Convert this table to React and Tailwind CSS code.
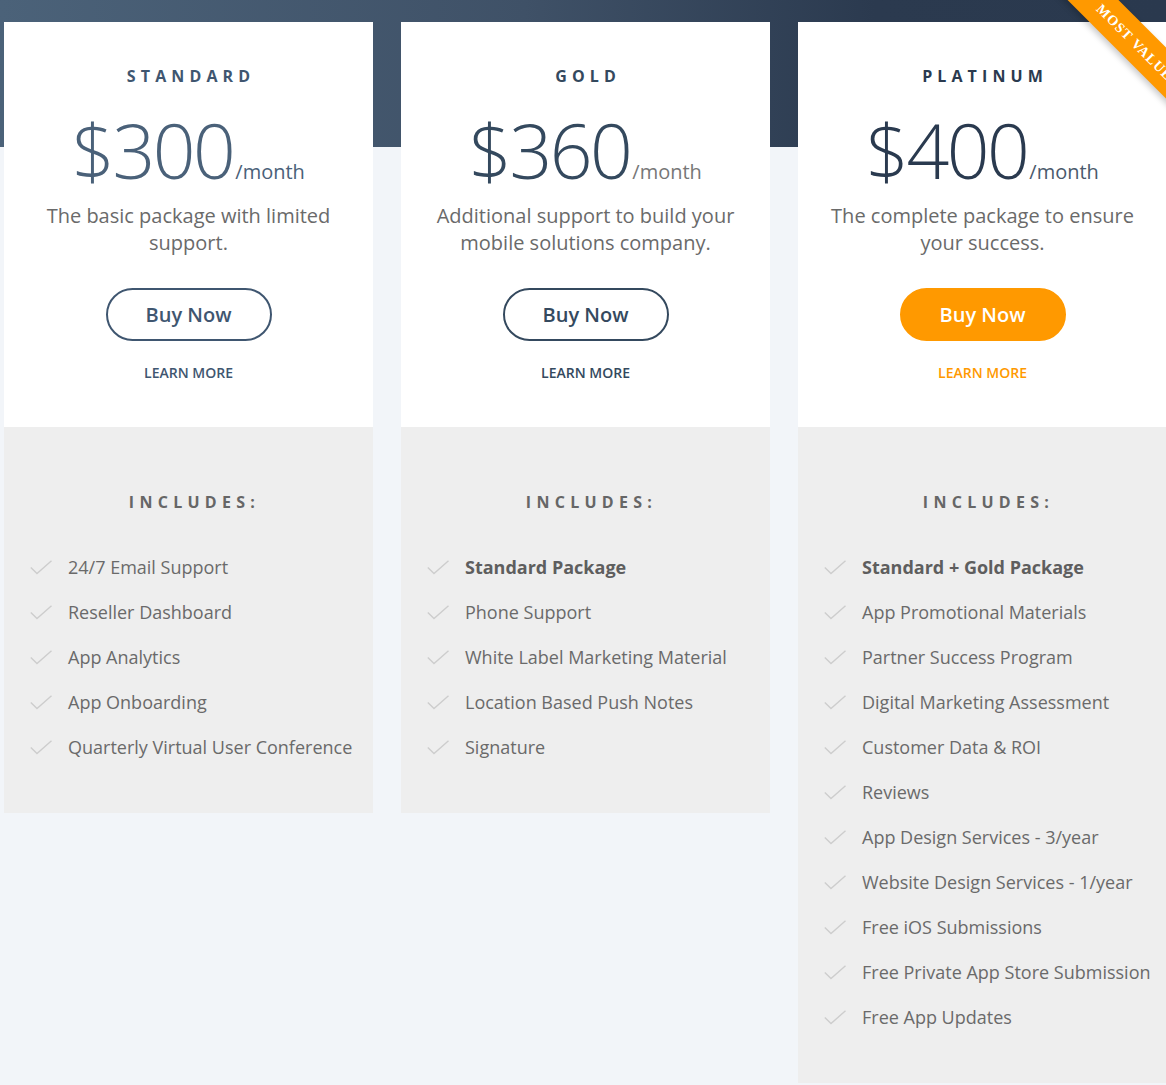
import React from 'react';

const plans = [
  {
    name: 'STANDARD',
    price: '$300',
    desc: 'The basic package with limited support.',
    nameColor: 'text-[#3f5670]',
    priceColor: 'text-[#4a6179]',
    monthColor: 'text-[#4a6179]',
    button: 'border-2 border-[#3f5670] text-[#3f5670] bg-white',
    learn: 'text-[#3f5670]',
    items: [
      { text: '24/7 Email Support' },
      { text: 'Reseller Dashboard' },
      { text: 'App Analytics' },
      { text: 'App Onboarding' },
      { text: 'Quarterly Virtual User Conference' },
    ],
  },
  {
    name: 'GOLD',
    price: '$360',
    desc: 'Additional support to build your mobile solutions company.',
    nameColor: 'text-[#34495e]',
    priceColor: 'text-[#34495e]',
    monthColor: 'text-[#777777]',
    button: 'border-2 border-[#34495e] text-[#34495e] bg-white',
    learn: 'text-[#34495e]',
    items: [
      { text: 'Standard Package', bold: true },
      { text: 'Phone Support' },
      { text: 'White Label Marketing Material' },
      { text: 'Location Based Push Notes' },
      { text: 'Signature' },
    ],
  },
  {
    name: 'PLATINUM',
    price: '$400',
    desc: 'The complete package to ensure your success.',
    nameColor: 'text-[#2a3a4f]',
    priceColor: 'text-[#2a3a4f]',
    monthColor: 'text-[#4a5a6c]',
    button: 'border-2 border-[#ff9900] text-white bg-[#ff9900]',
    learn: 'text-[#ff9900]',
    ribbon: true,
    items: [
      { text: 'Standard + Gold Package', bold: true },
      { text: 'App Promotional Materials' },
      { text: 'Partner Success Program' },
      { text: 'Digital Marketing Assessment' },
      { text: 'Customer Data & ROI' },
      { text: 'Reviews' },
      { text: 'App Design Services - 3/year' },
      { text: 'Website Design Services - 1/year' },
      { text: 'Free iOS Submissions' },
      { text: 'Free Private App Store Submission' },
      { text: 'Free App Updates' },
    ],
  },
];

const Check = () => (
  <svg width="22" height="15" viewBox="0 0 22 15" fill="none" className="shrink-0">
    <polyline points="0.8,7.5 7,13.5 21.5,0.8" stroke="#cdcdcd" strokeWidth="1.4" />
  </svg>
);

const PlanCard = ({ plan }) => (
  <div className="relative w-[369px]">
    {/* Ribbon */}
    {plan.ribbon && (
      <div className="absolute left-[222px] top-[2px] w-[230px] h-[36px] rotate-45 bg-[#ff9900] shadow-[0_3px_6px_rgba(0,0,0,0.22)] flex items-center justify-center z-10">
        <span className="text-white text-[14px] font-bold tracking-[1px] font-['Liberation_Serif',serif]">MOST VALUE</span>
      </div>
    )}

    {/* Top section */}
    <div className="bg-white flex flex-col items-center pt-[42px] pb-[43px] h-[405px]">
      <h3 className={`text-[16px] leading-[24px] font-bold tracking-[0.32em] pl-[0.32em] ${plan.nameColor}`}>
        {plan.name}
      </h3>
      <div className="mt-[24px] flex items-baseline">
        <span className={`text-[75px] leading-[76px] font-light tracking-[-2.5px] ${plan.priceColor}`}>{plan.price}</span>
        <span className={`text-[20px] ml-[2px] ${plan.monthColor}`}>/month</span>
      </div>
      <p className="mt-[14px] px-[22px] text-center text-[20px] leading-[27px] text-[#6a6a6a]">{plan.desc}</p>
      <button className={`mt-[32px] w-[166px] h-[53px] rounded-full text-[20px] font-semibold ${plan.button}`}>
        Buy Now
      </button>
      <a href="#" className={`mt-[22px] text-[14px] leading-[20px] font-semibold ${plan.learn}`}>LEARN MORE</a>
    </div>

    {/* Includes */}
    <div className="bg-[#eeeeee] pt-[63px] pb-[43px]">
      <h4 className="text-center text-[16px] leading-[24px] font-bold tracking-[0.33em] pl-[0.75em] text-[#666666]">
        INCLUDES:
      </h4>
      <ul className="mt-[31px] pl-[26px]">
        {plan.items.map((item) => (
          <li key={item.text} className="h-[45px] flex items-center gap-[16px]">
            <Check />
            <span className={`text-[18px] ${item.bold ? 'font-[680] text-[#5e5e5e]' : 'text-[#6a6a6a]'}`}>
              {item.text}
            </span>
          </li>
        ))}
      </ul>
    </div>
  </div>
);

export default function App() {
  return (
    <div className="min-h-[1085px] w-full overflow-hidden bg-[#f2f5f9] bg-[linear-gradient(to_right,#4b6279,#3f5167_45%,#2b3a4f_75%,#2a394e)] bg-no-repeat bg-[length:100%_147px] font-['Open_Sans',sans-serif]">
      <div className="flex items-start gap-[28px] pl-[4px] pt-[22px] w-[1200px]">
        {plans.map((plan) => (
          <PlanCard key={plan.name} plan={plan} />
        ))}
      </div>
    </div>
  );
}
